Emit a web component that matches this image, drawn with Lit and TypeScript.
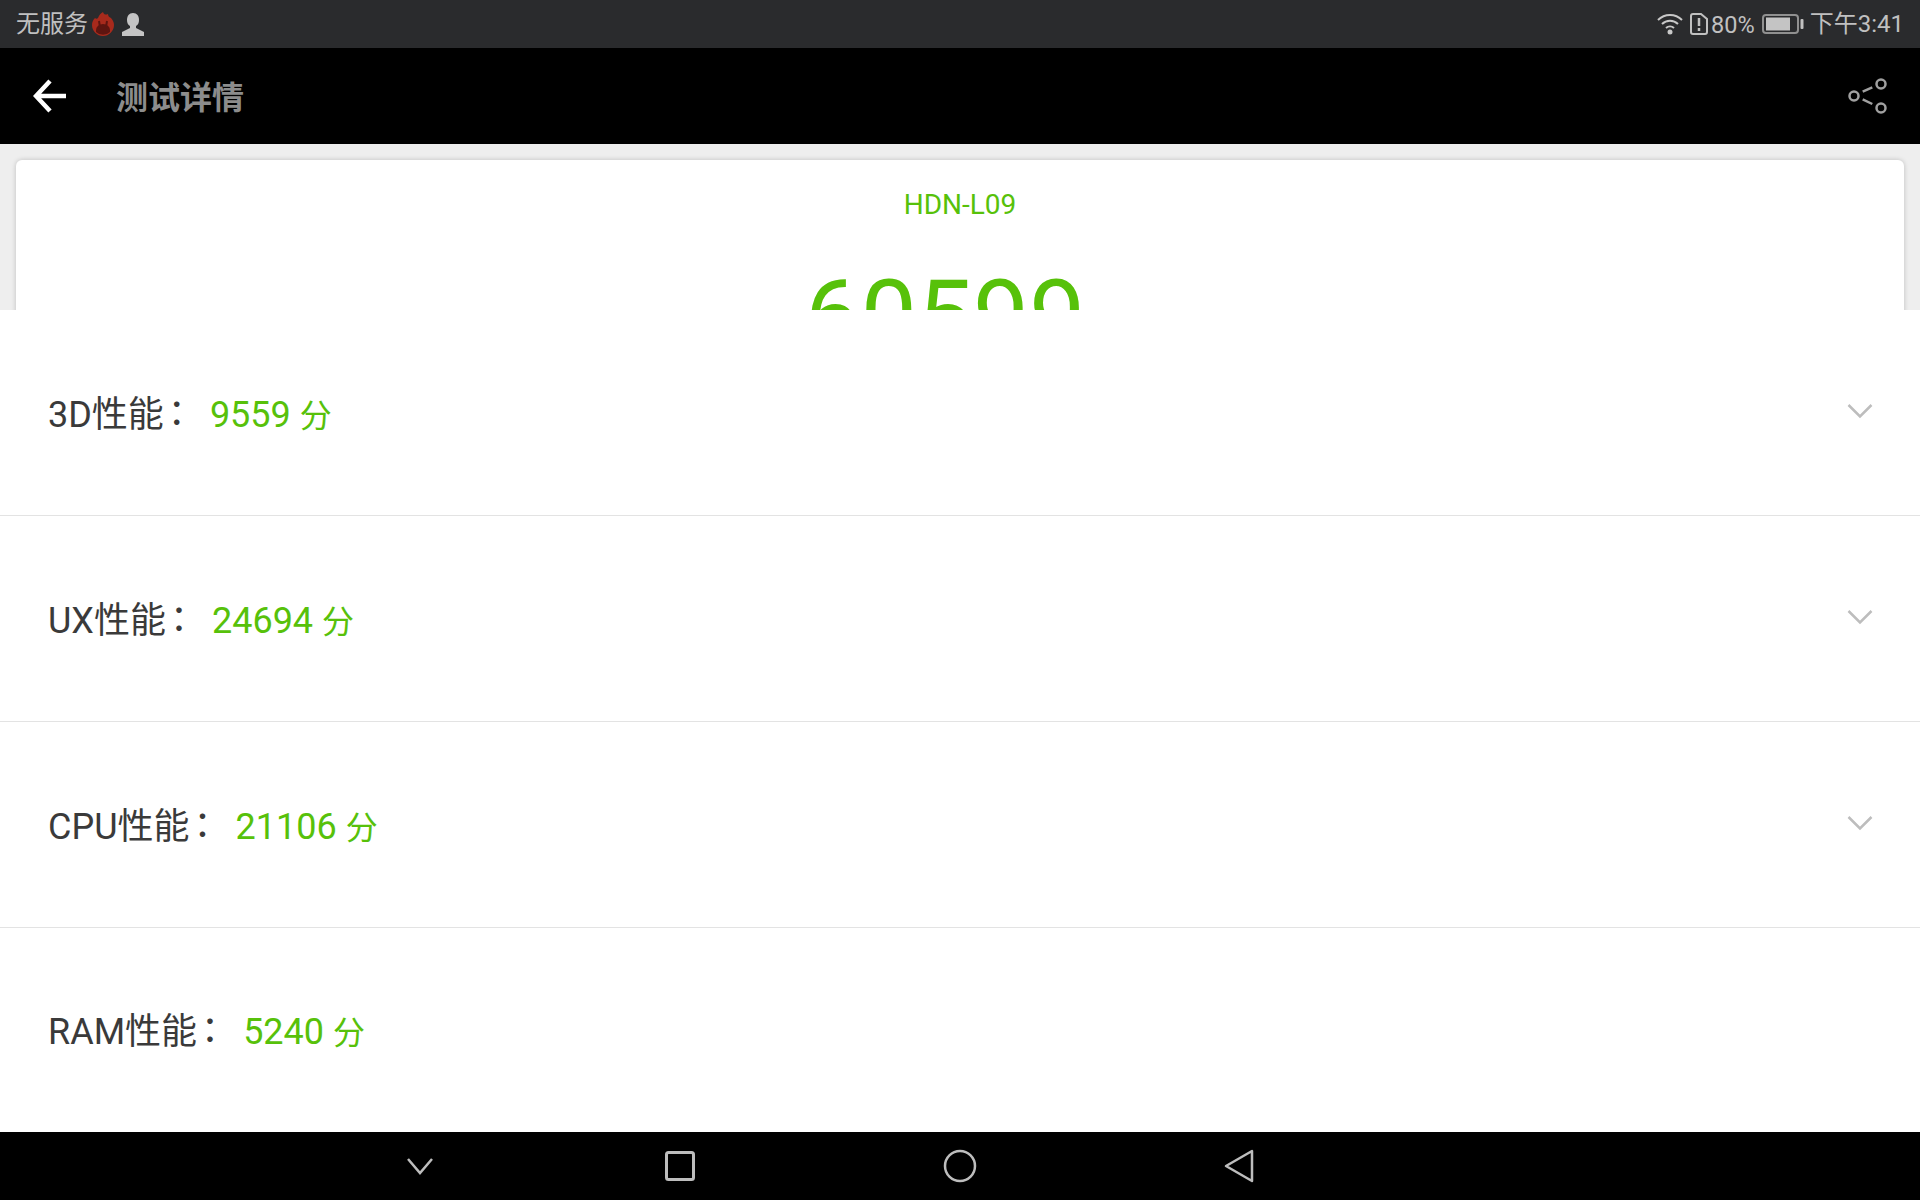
import { LitElement, html, css, svg } from "lit";
import { customElement } from "lit/decorators.js";

const rows = [
  { label: "3D性能", score: "9559", chevron: true },
  { label: "UX性能", score: "24694", chevron: true },
  { label: "CPU性能", score: "21106", chevron: true },
  { label: "RAM性能", score: "5240", chevron: false },
];

@customElement("app-root")
export class AppRoot extends LitElement {
  static styles = css`
    :host { display: flex; flex-direction: column; width: 1920px; height: 1200px; overflow: hidden; background: #fff;
      font-family: Roboto, "Noto Sans CJK SC", sans-serif; }
    svg { display: block; flex: none; }
    .status { height: 48px; flex: none; background: #2a2b2d; color: #c0c0c0; display: flex; align-items: center;
      justify-content: space-between; padding: 0 16px; font-size: 24px; }
    .side { display: flex; align-items: center; }
    .side span { line-height: 30px; }
    .toolbar { height: 96px; flex: none; background: #000; display: flex; align-items: center; padding: 0 33px 0 33px; }
    .title { margin-left: 49px; margin-top: -2px; font-size: 32px; font-weight: 700; color: #8c8c8c; flex: 1; }
    .stage { height: 166px; flex: none; background: #eeeeee; padding: 16px 16px 0; overflow: hidden; box-sizing: border-box; }
    .card { height: 300px; background: #fff; border-radius: 6px; box-shadow: 0 0 5px rgba(0,0,0,.2); text-align: center; color: #57c10a; }
    .model { padding-top: 29px; font-size: 28px; line-height: 32px; }
    .total { margin-top: 38px; padding-right: 30px; font-size: 100px; line-height: 116px; }
    .sheet { flex: 1; min-height: 0; background: #fff; }
    .row { height: 206px; box-sizing: border-box; border-bottom: 1px solid #e3e3e3; display: flex; align-items: center;
      justify-content: space-between; padding: 0 47px 0 48px; font-size: 36px; color: #3a3a3a; }
    .row.last { border-bottom: 0; height: 204px; }
    .line { margin-top: -4px; }
    .colon { font-family: Roboto, "Noto Sans CJK TC", sans-serif; font-feature-settings: "halt"; margin-left: 4px; }
    .score { color: #57c10a; margin-left: 24px; font-size: 36px; }
    .unit { font-size: 32px; }
    .nav { height: 68px; flex: none; background: #000; display: flex; align-items: center; padding-left: 406px; }
    .side .pct { margin-left: 3px; font-size: 23.500px; margin-top: 2px; }
    .time { margin-left: 6px; }
  `;

  private icon(w: number, h: number, body: unknown, extra = "") {
    return html`<svg width=${w} height=${h} viewBox="0 0 ${w} ${h}" style=${extra}>${body}</svg>`;
  }

  render() {
    return html`
      <div class="status">
        <div class="side">
          <span>无服务</span>
          ${this.icon(22, 24, svg`<path d="M11 0c1 3 3 3 5 2 0 2 1 3 3 4 2 2 3 5 3 7 0 6-5 11-11 11S0 19 0 13c0-3 1-5 3-7 1 1 2 1 3 0 1-3 3-5 5-6z" fill="#a82a1c"/><path d="M4 18a7 6 0 0 1 14 0v2a10 10 0 0 1-14 0z" fill="#5e1510"/><path d="M7 9l1 6M15 9l-1 6" stroke="#5e1510" stroke-width="2"/>`, "margin-left:4px")}
          ${this.icon(22, 23, svg`<path d="M11 0c4 0 6 3 6 7 0 3-1 5-3 6v2l8 4v4H0v-4l8-4v-2c-2-1-3-3-3-6 0-4 2-7 6-7z" fill="#c4c4c4"/>`, "margin-left:8px")}
        </div>
        <div class="side">
          ${this.icon(26, 22, svg`<g fill="none" stroke="#c8c8c8" stroke-width="2"><path d="M1 7a17 17 0 0 1 24 0"/><path d="M5 11a11.500 11.500 0 0 1 16 0"/><path d="M9 15a6 6 0 0 1 8 0"/></g><circle cx="13" cy="19" r="2.500" fill="#c8c8c8"/>`)}
          ${this.icon(18, 22, svg`<path d="M1 3a2 2 0 0 1 2-2h8l6 5v13a2 2 0 0 1-2 2H3a2 2 0 0 1-2-2z" fill="none" stroke="#c0c0c0" stroke-width="2"/><path d="M9 5v8M9 15v3" stroke="#c0c0c0" stroke-width="2.500"/>`, "margin-left:7px")}
          <span class="pct">80%</span>
          ${this.icon(42, 20, svg`<rect x="1" y="1" width="35" height="18" rx="3" fill="none" stroke="#909090" stroke-width="2"/><rect x="4" y="3.500" width="24" height="13" fill="#c4c4c4"/><rect x="38.500" y="5" width="3" height="10" rx="1" fill="#c0c0c0"/>`, "margin-left:7px")}
          <span class="time">下午3:41</span>
        </div>
      </div>
      <div class="toolbar">
        ${this.icon(34, 34, svg`<path d="M33 17H4M17 2L3 17l14 15" fill="none" stroke="#fff" stroke-width="4.500"/>`)}
        <div class="title">测试详情</div>
        ${this.icon(39, 36, svg`<g fill="none" stroke="#a0a0a0" stroke-width="2.500"><circle cx="6" cy="18" r="4.500"/><circle cx="33" cy="6" r="4.500"/><circle cx="33" cy="30" r="4.500"/><path d="M14.700 13.700l9.600-4.400M14.700 21.300l9.600 4.700"/></g>`)}
      </div>
      <div class="stage">
        <div class="card">
          <div class="model">HDN-L09</div>
          <div class="total">60599</div>
        </div>
      </div>
      <div class="sheet">
        ${rows.map((r, i) => html`
          <div class="row ${i === rows.length - 1 ? "last" : ""}">
            <div class="line"><span>${r.label}</span><span class="colon">：</span><span class="score">${r.score} <span class="unit">分</span></span></div>
            ${r.chevron ? this.icon(26, 16, svg`<path d="M1.500 2L13 13.500 24.500 2" fill="none" stroke="#bdbdbd" stroke-width="2.500"/>`, "margin-top:-4px") : ""}
          </div>`)}
      </div>
      <div class="nav">
        ${this.icon(28, 18, svg`<path d="M2 2l12 14L26 2" fill="none" stroke="#bdbdbd" stroke-width="2.500"/>`)}
        ${this.icon(30, 30, svg`<rect x="1.500" y="1.500" width="27" height="27" rx="2" fill="none" stroke="#bdbdbd" stroke-width="3"/>`, "margin-left:231px")}
        ${this.icon(34, 34, svg`<circle cx="17" cy="17" r="15" fill="none" stroke="#bdbdbd" stroke-width="2.500"/>`, "margin-left:248px")}
        ${this.icon(30, 34, svg`<path d="M28 2v30L2 17z" fill="none" stroke="#bdbdbd" stroke-width="2.500" stroke-linejoin="round"/>`, "margin-left:247px")}
      </div>
    `;
  }
}
